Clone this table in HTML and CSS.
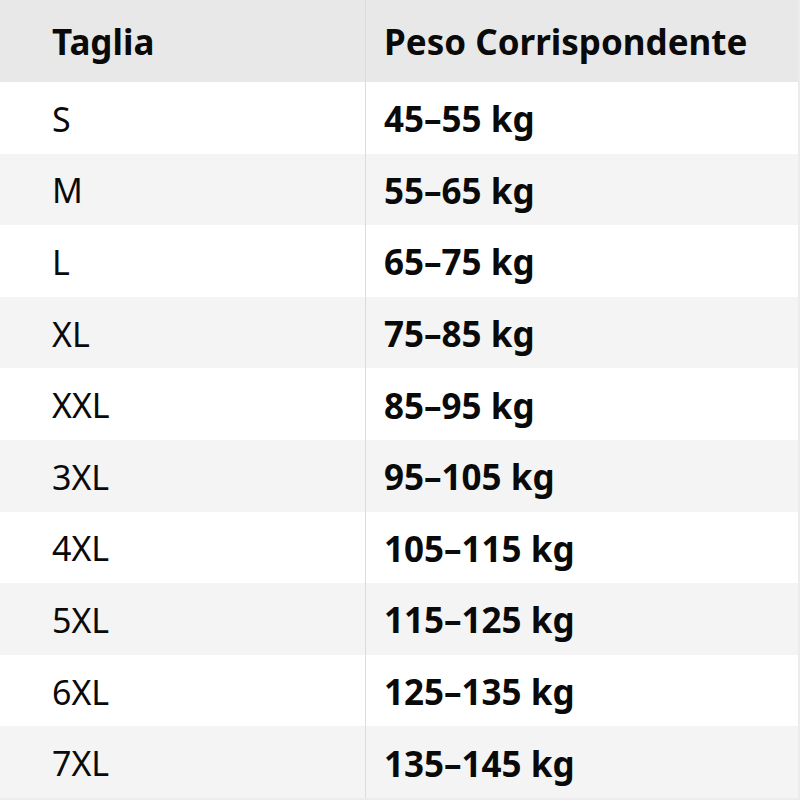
FILE: index.html
```html
<!DOCTYPE html>
<html lang="it">
<head>
<meta charset="utf-8">
<title>Tabella Taglie</title>
<link rel="stylesheet" href="styles.css">
</head>
<body>
<div class="table">
  <div class="row head"><div class="c1">Taglia</div><div class="c2">Peso Corrispondente</div></div>
  <div class="row"><div class="c1">S</div><div class="c2">45–55 kg</div></div>
  <div class="row alt"><div class="c1">M</div><div class="c2">55–65 kg</div></div>
  <div class="row"><div class="c1">L</div><div class="c2">65–75 kg</div></div>
  <div class="row alt"><div class="c1">XL</div><div class="c2">75–85 kg</div></div>
  <div class="row"><div class="c1">XXL</div><div class="c2">85–95 kg</div></div>
  <div class="row alt"><div class="c1">3XL</div><div class="c2">95–105 kg</div></div>
  <div class="row"><div class="c1">4XL</div><div class="c2">105–115 kg</div></div>
  <div class="row alt"><div class="c1">5XL</div><div class="c2">115–125 kg</div></div>
  <div class="row"><div class="c1">6XL</div><div class="c2">125–135 kg</div></div>
  <div class="row alt"><div class="c1">7XL</div><div class="c2">135–145 kg</div></div>
</div>
</body>
</html>
```
FILE: styles.css
```css
html, body {
  margin: 0;
  padding: 0;
  background: #ffffff;
}
.table {
  width: 800px;
  height: 800px;
  display: grid;
  grid-template-rows: 82px repeat(10, 1fr);
  font-family: "Noto Sans", "Open Sans", sans-serif;
  color: #0a0a0a;
  box-sizing: border-box;
  border-right: 2px solid #ececec;
  border-bottom: 2px solid #ececec;
}
.row {
  display: grid;
  grid-template-columns: 366px 1fr;
  align-items: center;
  font-size: 34px;
  line-height: 1.2;
}
.row.head {
  background: #e8e8e8;
  font-weight: 700;
}
.row.alt {
  background: #f4f4f4;
}
.c1 {
  padding-left: 52px;
  padding-top: 3px;
  height: 100%;
  display: flex;
  align-items: center;
  border-right: 1px solid #dcdcdc;
  box-sizing: border-box;
}
.c2 {
  padding-left: 18px;
  padding-top: 3px;
  font-weight: 700;
  font-size: 35px;
}
.head .c1, .head .c2 {
  font-size: 35px;
  padding-top: 2px;
}
```
